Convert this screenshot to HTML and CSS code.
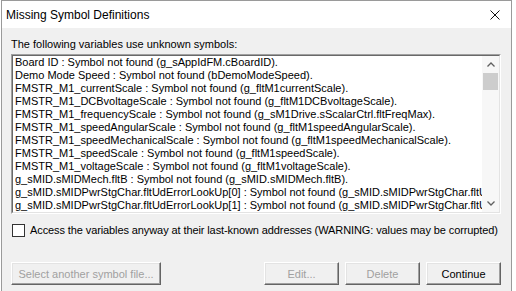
FILE: index.html
```html
<html lang="en">
<head>
    <meta charset="UTF-8">
    <title>Missing Symbol Definitions</title>
    <link rel="stylesheet" href="styles.css">
</head>
<body>
    <div class="window">

        <div class="titlebar">
            <span class="title">Missing Symbol Definitions</span>
            <span class="close">
                <svg width="10" height="10" viewBox="0 0 10 10">
                    <path d="M0.5 0.5 L9.5 9.5 M9.5 0.5 L0.5 9.5" stroke="#111" stroke-width="1" fill="none"/>
                </svg>
            </span>
        </div>

        <div class="content">
            <div class="caption">The following variables use unknown symbols:</div>

            <div class="listbox">
                <div class="list-inner">
                    <ul class="items">
                        <li>Board ID : Symbol not found (g_sAppIdFM.cBoardID).</li>
                        <li>Demo Mode Speed : Symbol not found (bDemoModeSpeed).</li>
                        <li>FMSTR_M1_currentScale : Symbol not found (g_fltM1currentScale).</li>
                        <li>FMSTR_M1_DCBvoltageScale : Symbol not found (g_fltM1DCBvoltageScale).</li>
                        <li>FMSTR_M1_frequencyScale : Symbol not found (g_sM1Drive.sScalarCtrl.fltFreqMax).</li>
                        <li>FMSTR_M1_speedAngularScale : Symbol not found (g_fltM1speedAngularScale).</li>
                        <li>FMSTR_M1_speedMechanicalScale : Symbol not found (g_fltM1speedMechanicalScale).</li>
                        <li>FMSTR_M1_speedScale : Symbol not found (g_fltM1speedScale).</li>
                        <li>FMSTR_M1_voltageScale : Symbol not found (g_fltM1voltageScale).</li>
                        <li>g_sMID.sMIDMech.fltB : Symbol not found (g_sMID.sMIDMech.fltB).</li>
                        <li>g_sMID.sMIDPwrStgChar.fltUdErrorLookUp[0] : Symbol not found (g_sMID.sMIDPwrStgChar.fltUdErrorLookUp[0]).</li>
                        <li>g_sMID.sMIDPwrStgChar.fltUdErrorLookUp[1] : Symbol not found (g_sMID.sMIDPwrStgChar.fltUdErrorLookUp[1]).</li>
                    </ul>
                    <div class="scrollbar">
                        <div class="sb-btn">
                            <svg width="8" height="5" viewBox="0 0 8 5">
                                <path d="M0.5 4.5 L4 1 L7.5 4.5" stroke="#606060" stroke-width="1.3" fill="none"/>
                            </svg>
                        </div>
                        <div class="sb-track">
                            <div class="sb-thumb"></div>
                        </div>
                        <div class="sb-btn">
                            <svg width="8" height="5" viewBox="0 0 8 5">
                                <path d="M0.5 0.5 L4 4 L7.5 0.5" stroke="#606060" stroke-width="1.3" fill="none"/>
                            </svg>
                        </div>
                    </div>
                </div>
            </div>

            <label class="check">
                <span class="box"></span>
                <span>Access the variables anyway at their last-known addresses (WARNING: values may be corrupted)</span>
            </label>

            <div class="buttons">
                <button class="wide" disabled>Select another symbol file...</button>
                <div class="spacer"></div>
                <button disabled>Edit...</button>
                <button disabled>Delete</button>
                <button>Continue</button>
            </div>
        </div>

    </div>
</body>
</html>
```

FILE: styles.css
```css
* {
    box-sizing: border-box;
}

body {
    margin: 0;
    background: #ffffff;
    font-family: "Liberation Sans", Arial, sans-serif;
    font-size: 11px;
    color: #000;
    overflow: hidden;
}

.window {
    margin-left: 1px;
    width: 511px;
    height: 291px;
    border: 1px solid #9a9a9a;
    border-bottom: none;
    background: #f0f0f0;
    overflow: hidden;
}

.titlebar {
    height: 27px;
    background: #ffffff;
    display: flex;
    align-items: center;
    padding: 0 6px 0 4px;
}

.title {
    font-size: 12px;
    flex: 1;
}

.close {
    display: flex;
    width: 10px;
    height: 10px;
    margin-right: 5px;
}

.content {
    padding: 9px 10px 0 9px;
}

.caption {
    line-height: 15px;
    margin-bottom: 2px;
}

/* sunken 3d border */
.listbox {
    height: 160px;
    border: 1px solid;
    border-color: #a0a0a0 #ffffff #ffffff #a0a0a0;
}

.list-inner {
    height: 100%;
    border: 1px solid;
    border-color: #696969 #e3e3e3 #e3e3e3 #696969;
    background: #ffffff;
    display: flex;
}

.items {
    flex: 1;
    margin: 0;
    padding: 0 0 0 2px;
    list-style: none;
    overflow: hidden;
    line-height: 13px;
    white-space: nowrap;
}

.scrollbar {
    width: 17px;
    flex-shrink: 0;
    display: flex;
    flex-direction: column;
    background: #f7f7f7;
}

.sb-btn {
    height: 17px;
    display: flex;
    align-items: center;
    justify-content: center;
}

.sb-track {
    flex: 1;
}

.sb-thumb {
    height: 17px;
    margin: 0 1px;
    background: #cdcdcd;
}

.check {
    display: flex;
    align-items: center;
    margin-top: 10px;
    margin-left: 1px;
    line-height: 13px;
    letter-spacing: -0.1px;
    white-space: nowrap;
}

.box {
    flex-shrink: 0;
    width: 13px;
    height: 13px;
    border: 1px solid #333;
    background: #fff;
    margin-right: 5px;
}

.buttons {
    display: flex;
    gap: 6px;
    margin-top: 25px;
}

.spacer {
    flex: 1;
}

button {
    flex-shrink: 0;
    width: 75px;
    height: 23px;
    padding: 0;
    font-family: "Liberation Sans", Arial, sans-serif;
    font-size: 11px;
    color: #000;
    background: #f0f0f0;
    border: 1px solid;
    border-color: #ffffff #646464 #646464 #ffffff;
    box-shadow: inset -1px -1px 0 #a0a0a0, inset 1px 1px 0 #e3e3e3;
}

button:disabled {
    color: #a0a0a0;
}

button.wide {
    width: 150px;
}
```
